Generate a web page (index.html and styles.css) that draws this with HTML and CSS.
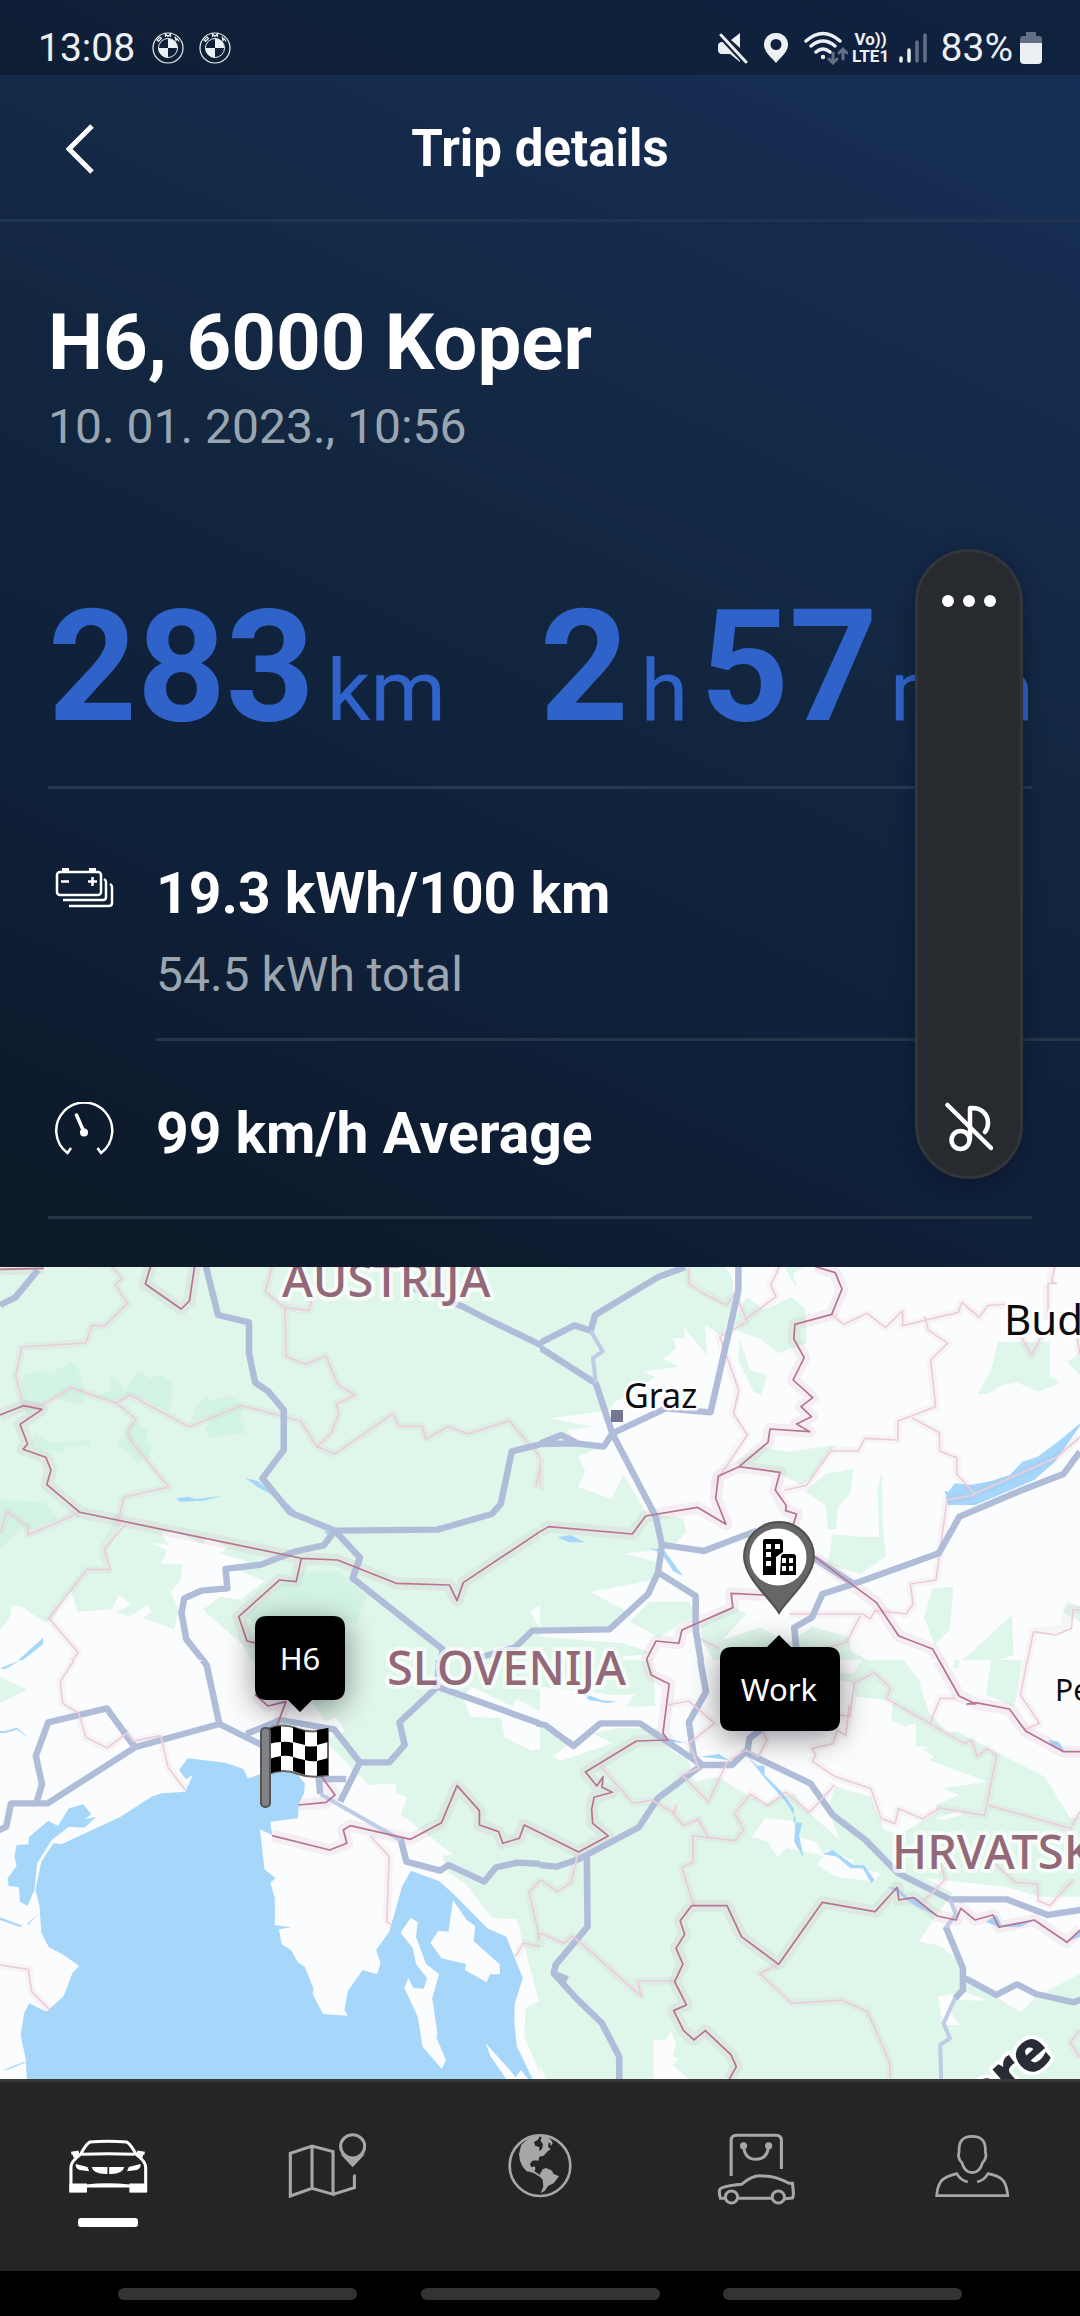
FILE: index.html
```html
<!DOCTYPE html>
<html lang="en">
<head>
<meta charset="utf-8">
<meta name="viewport" content="width=device-width, initial-scale=1">
<title>Trip details</title>
<link rel="stylesheet" href="styles.css">
</head>
<body>
<div class="app">
  <div class="status">
    <span class="clock">13:08</span>
    <svg class="badge" viewBox="0 0 32 32"><use href="#roundel"/></svg>
    <svg class="badge" viewBox="0 0 32 32"><use href="#roundel"/></svg>
    <div class="indicators">
      <svg width="30" height="32" viewBox="0 0 30 32" fill="#eceff3"><path d="M3 10h5l14 16v4L12 22H3q-3-1-3-4v-5q0-2 3-3zM13 8l9-7v15z"/><path d="M3 3l25 27" stroke="#10223a" stroke-width="7"/><path d="M3 3l25 27" stroke="#eceff3" stroke-width="3" stroke-linecap="round"/></svg>
      <svg class="place" width="24" height="32" viewBox="0 0 24 32" fill="#eceff3"><path fill-rule="evenodd" d="M12 1a11.500 11.500 0 0 1 12 12c0 7-8 13-12 18C8 26 0 20 0 13A11.500 11.500 0 0 1 12 1zm0 6a5.500 5.500 0 1 0 0 11 5.500 5.500 0 0 0 0-11z"/></svg>
      <svg class="wifi" width="44" height="34" viewBox="0 0 44 34" fill="none" stroke="#eceff3" stroke-width="3.500" stroke-linecap="round"><path d="M2 10q17-15 34 0M7 15q12-10 24 0M12 21q7-6 14 0"/><circle cx="19" cy="26" r="2.200" fill="#eceff3" stroke="none"/><path d="M29 22v10m-4-4l4 4 4-4M39 28V18m-4 4l4-4 4 4" stroke="#637084" stroke-width="3"/></svg>
      <span class="volte"><span>Vo))</span><span>LTE1</span></span>
      <svg class="bars" width="28" height="32" viewBox="0 0 28 32" stroke-width="3.500" stroke-linecap="round"><path d="M2 26v3M10 18v11" stroke="#eceff3"/><path d="M18 10v19M26 3v26" stroke="#637084"/></svg>
      <span class="percent">83%</span>
      <svg width="22" height="32" viewBox="0 0 22 32"><path d="M6 0h10v4h3q3 0 3 3v5H0V7q0-3 3-3h3z" fill="#637084"/><path d="M0 11h22v17q0 4-4 4H4q-4 0-4-4z" fill="#eceff3"/></svg>
    </div>
  </div>

  <header class="header">
    <button class="back" aria-label="Back"><svg width="28" height="50" viewBox="0 0 28 50" fill="none" stroke="#fff" stroke-width="5"><path d="M26 2L3 25l23 23"/></svg></button>
    <h1>Trip details</h1>
  </header>

  <main class="trip">
    <section class="summary">
      <h2>H6, 6000 Koper</h2>
      <p class="when">10. 01. 2023., 10:56</p>
      <div class="totals">
        <div class="total"><b>283</b><span class="unit">km</span></div>
        <div class="total"><b>2</b><span class="unit">h</span><b>57</b><span class="unit">min</span></div>
      </div>
    </section>
    <section class="facts">
      <div class="fact">
        <svg class="fact-icon" viewBox="0 0 60 64" fill="none" stroke="#fff" stroke-width="2.500"><rect x="3" y="10" width="44" height="23" rx="3"/><path d="M8 6h7v4H8zM35 6h7v4h-7z" fill="#fff" stroke="none"/><path d="M7 19.500h8M34 19.500h9M38.500 15v9M50 17q2 1 2 3v15q0 3-3 3H9M56 22q2 1 2 3v16q0 3-3 3H15"/></svg>
        <div class="fact-body energy"><strong>19.3 kWh/100 km</strong><span>54.5 kWh total</span></div>
      </div>
      <div class="fact">
        <svg class="fact-icon" viewBox="0 0 60 64" fill="none" stroke="#fff" stroke-width="2.500"><path d="M17 46l-3.500 5A28 28 0 1 1 47 51L43.500 46"/><path d="M22.500 13l7.500 17" stroke-width="3.500" stroke-linecap="round"/><circle cx="30" cy="30.500" r="4" fill="#fff" stroke="none"/></svg>
        <div class="fact-body speed"><strong>99 km/h Average</strong></div>
      </div>
    </section>
    <aside class="sound-panel">
      <button aria-label="More"><svg width="54" height="12" viewBox="0 0 54 12" fill="#fff"><circle cx="6" cy="6" r="6"/><circle cx="27" cy="6" r="6"/><circle cx="48" cy="6" r="6"/></svg></button>
      <button aria-label="Media muted"><svg width="48" height="50" viewBox="0 0 48 50" fill="none" stroke="#fff" stroke-width="4.500" stroke-linecap="round" stroke-linejoin="round"><path d="M2.500 3L46 46M25 37V6c11-1 18 6 18 15q0 5-3 9"/><circle cx="15.500" cy="38" r="9"/></svg></button>
    </aside>
  </main>

  <section class="map" aria-label="Route map">
    <svg class="map-art" viewBox="0 7 1080 812" preserveAspectRatio="xMidYMid slice">
      <defs>
        <filter id="shadow" x="-60%" y="-60%" width="220%" height="220%"><feDropShadow dx="0" dy="6" stdDeviation="15" flood-color="#001018" flood-opacity=".45"/></filter>
        <g id="nw">
          <g class="wood"><path d="M0 0H1568V1035L1540 1055 1568 1105V1215H905L740 1215 700 1150 600 1060 590 1048 640 1010 700 1020 768 963 690 930 720 905 640 880 662 860 600 830 590 852 510 815 468 818 490 855 435 848 485 870 470 910 530 912 525 960 495 995 520 1050 505 1108 415 1075 440 1055 430 1035 375 1070 335 1055 382 1035 345 1005 325 1048 225 1055 205 990 150 1080 125 1085 65 1040 35 1035 30 1070 0 1110z"/></g>
          <g class="deep"><path d="M65 345l60-15 20 12 60-35 20 15 20 50-5 65-80-25-70 50-30-20zM320 340l45 50 35-60 38 25-18 65-50-15-40 20-50-15 40-20zM430 360l35-15 35 20v60l-10 30-65-35zM555 480l20-50 30-25v20l60-20 45 30-15 35 20 50-55 5-50 10-15-30 20-30zM100 520l50 30 110-10 5 15-70 5-20 20-40-10-40-5zM380 480l50 30-5 30 15 10-5 50-20-15-15 35-20-35-40-30 30-40zM0 720l130 5 40 55-90 30-20-5-60 60zM815 970l60-35h110l80 70-30 80-280 20-40-40 80-60z"/></g>
          <g class="water"><path d="M0 1228l45-20 80-75v20l-72 58zM512 715l35-5 20 7 25-2 50-8-50 15-70 3zM713 655l35 8 75 60-75-42zM835 730l30 30h-20zM940 812l30 5-15 15z"/></g>
          <g class="region-halo"><path d="M325 20l30 35-20 20 35 55-65 67h-38l-18 52-186 12-17 85 20 90 55 0 86-53 130 47 40-25 172 95 152-63 172 46 48 78 52 20 168-120 17 38h68l10 38 65-37 57 22 120-40 95 115-17 85M340 430l55 48-25 35 10 30 110 138-130 30-20 82-42 77 17 60H253L142 1075l85 103-57 82M0 820l20-65 62 45v25l148-67M790 20l-20 75 55 47 72 10 13-50M827 145l4 145 56 23 59-25 35 85 50 33-55 27 8 28-22 57-42 43M270 20l20-10"/></g>
          <g class="state-halo"><path d="M0 465L68 437 122 448 58 493 80 552 67 568 133 592 148 630 136 674 232 757 875 895 980 900 1150 970 1305 975 1327 1022 1345 968 1568 815M875 895L860 965 812 960 693 1070 717 1143 745 1150M437 20L422 72 526 147 550 123 565 20M0 28L127 25"/></g>
          <g class="region"><path d="M325 20l30 35-20 20 35 55-65 67h-38l-18 52-186 12-17 85 20 90 55 0 86-53 130 47 40-25 172 95 152-63 172 46 48 78 52 20 168-120 17 38h68l10 38 65-37 57 22 120-40 95 115-17 85M340 430l55 48-25 35 10 30 110 138-130 30-20 82M365 793l-62 75 17 60H253L142 1075l85 103-57 82M0 820l20-65 62 45v25l148-67M790 20l-20 75 55 47 72 10 13-50M827 145l4 145 56 23 59-25 35 85 50 33-55 27 8 28-22 57-42 43"/></g>
          <g class="road"><path d="M0 135L45 112 110 30M598 20L633 165 723 187V280L741 368 780 395 824 450V570L762 655 842 757 972 812 1270 809 1428 762 1454 732 1486 574 1580 550M972 812L940 856 855 875 758 914 655 927 660 985 585 992 535 1015 527 1060 541 1138 598 1212 606 1260M972 812L1045 893 1024 955 1285 1168 1270 1290M1200 85L1340 138 1420 180 1580 260M1568 1112h-22l-50 50-150 45-20 60"/></g>
          <g class="state"><path d="M0 465L68 437 122 448 58 493 80 552 67 568 133 592 148 630 136 674 232 757 875 895 980 900 1150 970 1305 975 1327 1022 1345 968 1568 815M875 895L860 965 812 960 693 1070 717 1143 745 1150M437 20L422 72 526 147 550 123 565 20M0 28L127 25"/></g>
        </g>
        <g id="ne">
          <g class="wood"><path d="M0 0H530L560 60V130L530 230 480 195 485 285 420 205 420 235 385 235 397 265 358 297 402 320 300 335 335 352 215 428 205 450 30 475 152 500 80 510 100 540 180 560 110 590 132 635 110 680 208 717 242 645 310 760 415 775 425 815 395 850 350 870 245 880 352 910 330 960 145 995 250 1053 200 1110H0zM600 110l50 40 80-38 40 33 5 105-85 30-45-40-65-25-20-30zM580 240l30 90 50 15-18 60-22-10-45-95zM710 20h55l-30 20 10 45zM860 555l-140 20-80-15-75 50 125 30 70 35 40-35zM910 627l-80 15-60 50 60 45 5 70h25l5-65 35-40zM993 632l-13 60 5 138-60 0-75-7-15 90 95 30 75-55-10-85zM1310 330l20-85h150v100l30 25-65 25-60-28-45 8-40 28-30-1zM1568 280l-38 25 38 40zM1140 985l60-5-10 130-45 45-30-85zM1370 1065l5 120-85 30-50 45-70-20 80-60zM260 1085l60-60 110 0 30 40-60 30-55 37zM600 1060l-70 80 110-38 80 48 70-50 105 30 10 45 100 55v30H535L470 1140v-50l90-50zM0 1130l240 20 90 30-90 10v40L0 1200zM1568 1040l-38-15-10 35 48 25z"/></g>
          <g class="water"><path d="M1580 480l-70 60-65 50-45 15-35 40-55 18-60 12-45-5-20 25-10-2 10 42h80l170-75 60-55zM50 832l40-7 40 22-45 0zM315 865l45 5 55 78-28-14-35-55z"/></g>
          <g class="region-halo"><path d="M395 20l37 10v40l108 65 25-35 35 85-80 45 55 160-15 70 40 65-100 150M595 180l90-70-15-35 25-55M847 163l35 30 68-33 53 42 50-50v45l162-40 10-30 50 45 25-35 55-5M1117 168l10 42 57 40-50 50 15 140-110 43v57l-95-5-20 38h-80l-70 103-65 15M1080 473l80 45v55l50 20v50l52 58 240-110 66-60M1262 705l-80 15-22 160-10 80-75 12 8 60-20 30-90-10-15 25-20-15H725M930 1067l-40 80-70 20M460 1090v45l60 30M1490 20l-10 45M1473 70v110M1395 225l32 62 30-60M1560 235l8 50M1568 1050l-35 0-10 55-90 10-30 150M0 590v100"/></g>
          <g class="state-halo"><path d="M0 815L25 800 268 822 307 768 457 742 540 793 510 715 518 648 578 620 662 547 668 507 783 515 745 492 788 470 758 440 792 413 735 360 767 293 737 237 740 193 847 163 877 87 857 38 800 20M578 620L697 637 683 690 715 752 745 762 735 795M797 890L977 1028 1042 1128 1140 1167 1190 1260M355 1260L325 1245 310 1197 337 1143 403 1150 412 1110 560 1043 555 1000 650 1005"/></g>
          <g class="region"><path d="M400 20l32 10v40l40 30 70 35 25-35 35 85-80 45 55 160-15 70 40 65-82 127M595 180l90-70-15-35 25-55M847 163l35 30 68-33 53 42 50-50v45l162-40 10-30 50 45 25-35 55-5M1117 168l10 42 57 40-50 50 15 140-110 43v57l-95-5-20 38h-80l-70 103-65 15M1080 473l80 45v55l50 20v50l52 58 240-110 66-60M1262 705l-80 15-22 160-10 80-75 12 8 60-20 30-90-10-15 25-20-15H725M930 1067l-40 80-70 20M460 1090v45l60 30M1495 20l-10 45 15 5h-25v110M1395 225l32 62 30-60M1560 235l8 50M1568 1050h-20l-5 55-45 20-65-10-30 150M0 590v100"/></g>
          <g class="road"><path d="M420 22L345 50 160 165 147 212 100 196-12 255 162 370 210 520 336 770 354 855 343 937 452 1008V1110L478 1270M343 937L314 1002 202 1108 0 1112M576 20V92L495 457 365 445 210 520 185 560 105 550 0 552M0 550L62 525 105 548M354 855L475 873 630 812M797 895L910 972M745 1170L738 1103 790 1072 820 1002 910 972 1158 880 1218 770 1400 690 1520 642 1568 575"/><path class="thin" d="M147 212l35 62-28 20 8 76"/></g>
          <g class="state"><path d="M0 815L25 800 268 822 307 768 457 742 540 793 510 715 518 648 578 620 662 547 668 507 783 515 745 492 788 470 758 440 792 413 735 360 767 293 737 237 740 193 847 163 877 87 857 38 800 20M578 620L697 637 683 690 715 737 713 752 745 762 735 795M797 890L977 1028 1042 1128 1140 1167 1190 1260M355 1260L325 1245 310 1197 337 1143 403 1150 412 1110 560 1043 555 1000 650 1005"/></g>
        </g>
        <g id="sw">
          <g class="wood"><path d="M905 0V120L945 185 975 172 1002 215 940 240 1070 375 1150 370V397L1183 412 1163 463 1318 585 1285 587 1300 635 1355 675 1430 775 1500 778 1565 1022 1525 1045 1523 1130 1575 1257V0zM0 50l78 38L0 130z"/></g>
          <g class="land"><path d="M1370 80l120 60 8-25 70 40v110l-23 8-80-40-10-58-90-5-20-60z"/></g>
          <g class="water"><path d="M78 1265L75 1200 60 1125 70 1060 85 1030 135 1055 185 1008 210 940 230 918 185 885 142 862 120 818 115 740 103 690 120 605 155 550 180 552 350 470 440 410 470 400 538 395 560 345 540 357 520 330 545 295 655 308 708 328 720 357 688 366 755 343 800 325 860 340 885 370 883 400 868 430 865 475 785 485 790 525 755 508 768 628 800 655 785 668 798 715V795L845 802 810 808 818 853 845 870 865 907 885 920 910 985 908 1003 938 1062 1010 1067 1000 1050 1010 993 1053 930 1095 943 1105 910 1092 870 1130 815 1150 745 1167 680 1193 632 1275 663 1320 705 1415 805 1470 830 1518 955 1495 1030 1493 1080 1500 1157 1550 1265zM242 433L265 463 247 478 280 470 245 503 200 500 150 540 108 610 100 690 80 738 58 725 55 682 25 678 22 655 48 618 42 590 48 555 82 553 85 530 140 482 168 498 200 445zM0 772l65 25-7 4L0 780zM78 793l32-30-28 32zM5 1232l72-30v4l-50 22zM0 213h15l33-10 38 32-38-26-33 10H0zM0 25L60 0 15 28z"/></g>
          <g class="land"><path d="M1193 773L1213 787 1208 830 1237 912 1275 943 1255 1015 1270 1120 1267 1133 1295 1200 1283 1227 1227 1160 1213 1070 1174 983 1186 953 1200 983 1230 987 1240 955 1208 912 1198 863 1163 818zM1315 720L1355 780 1380 798 1375 843 1450 912 1452 943 1423 943 1413 967 1350 930 1353 912 1282 895 1250 848 1273 812 1302 815zM1410 1150L1478 1227 1497 1253 1512 1230 1540 1265H1475L1425 1190z"/></g>
          <g class="region-halo"><path d="M215 0l-40 65 7 65 47 30 20 72 62 32 58-45 17 25 80-17 22 95 50 68M0 915l82 13 10 67 55 57M1075 528l55 62-7 195 15 10M1497 890l22-40 49 10M1568 660l-32 37 32 145"/></g>
          <g class="state-halo"><path d="M740 103L778 138 830 125 805 195M930 345L973 405 947 427 867 435M790 527L957 570 1007 550 997 510 1017 497 1192 538 1282 488 1327 377 1392 452V495L1448 515 1460 550 1508 535 1522 495 1568 518"/></g>
          <g class="road"><path d="M588 0l12 15L637 192 392 262 138 430H32L18 500-5 512M392 262L310 145 140 187 104 288 122 372 107 425M637 192L760 255M715 222L815 180 970 208 1045 307 988 425M920 357h85M925 350l5 52M1045 307h85L1175 255 1160 187 1270 80 1275 0M1270 80L1580 195M1163 535L1180 605 1278 632 1303 615 1406 665 1440 622 1502 608 1580 612"/><path class="thin" d="M930 402L1163 540"/></g>
          <g class="region"><path d="M215 0l-40 65 7 65 47 30 20 72 62 32 58-45 17 25 80-17 22 95 50 68M0 915l82 13 10 67 55 57M1075 528l55 62-7 195 15 10M1497 890l22-40 49 10M1568 660l-32 37 32 145"/></g>
          <g class="state"><path d="M740 103L778 138 830 125 805 195M930 345L973 405 947 427 867 435M790 527L957 570 1007 550 997 510 1017 497 1192 538 1282 488 1327 377 1392 452V495L1448 515 1460 550 1508 535 1522 495 1568 518"/></g>
        </g>
        <g id="se">
          <g class="wood"><path d="M0 0H1580V1265H0z"/></g>
          <g class="land"><path d="M0 80L140 95 210 105 275 103 250 140 335 138 330 40 320 0H560V60H870L910 70 915 110 1000 120 1025 120 1020 180 1058 200 1092 190V260L1145 260 1110 268 1145 290 1130 300 1300 365 1170 385 1218 405 1150 435V460L1050 520 1000 510 960 410 860 380 835 440 870 540 805 480 760 440 740 400 650 430 560 380 520 350 450 365 430 300 380 270 340 205 225 205 150 220 210 250 60 302 35 290 100 240 0 200zM870 0V40H910L935 0zM1055 0L1100 60 1130 160 1180 215 1210 213 1350 290 1465 350 1540 475 1580 465V0zM615 530L655 473 735 483 750 530 800 545 830 590 715 563 690 590 660 545zM805 615L835 570 910 600 905 620 993 640 970 665 860 650zM1120 655L1350 680 1450 710H1580V935L1440 1010 1395 1057 1330 1015 1240 960 1230 920 1165 858 1100 845 1145 775 1200 700zM1155 1010L1230 995 1300 1022 1205 1020 1195 1060 1220 1095H1170zM330 1140H365L380 1113 395 1150 385 1190 403 1195 385 1215 440 1265H330zM0 1215l20 50H0zM1150 475l60-20 20 10-60 15z"/></g>
          <g class="wood"><path d="M1310 0H1400L1378 140 1295 105zM1205 0l-5 25 15 0 3-25z"/></g>
          <g class="water"><path d="M600 285l30 32h22v28l50 50 35 50v40l25 5-10 35 14 70-28-50 5-70-30-50-60-70zM822 582l28-12 60 45 30 0 32 45-10 10-25-45-35 0-40-35zM1010 680l30 5 25 25 30 5 60 55-70-35-45-35zM1295 785l30-20 15 30 100-15-50 22-60-2zM1475 240l30 5 20 30-35-15zM465 290l55-8 28 18-40-5zM110 90l65 30 48 5-30 4-50-9zM372 235l55 15-50-5zM1530 845l38-35v20z"/></g>
          <g class="region-halo"><path d="M372 135l60-12 75 67-75 60 30 75-50 20 77 80 55-120 55-35 35 20 25-50-15-30M870 165l30 5 12-100 58-32 47 45-10 33 225 135 22-10 15 48 30-23 27 20-35 180-130-22-50 32-70-30-10 45-40-15-30-90-105-37-65-45 10-20-12-18 62-15 12-40 25 15 10-90M855 375l-72 82-70-60-52 40-50-35-45 58 25 50-25 32-122-15v80l-32 15 35 118M175 318l95 112 55-10 65 40 27 37 42-20 30 55M1130 195l32-80h45M1415 0l-20 105 55 85-45 20M1305 437l235 68 28-50M110 580l-20 88-40 27-50-37M0 820l70 30 25-22 200 182-12-47h107M693 913l-55 27 93 90 145-10 75 35 65 155v45M1165 610l10 50-62 65M1320 610l60 57 65 5 2 50 33 15 70-80M1568 1110l-28 38 28 45M0 820v40"/></g>
          <g class="state-halo"><path d="M0 518L112 576 198 528 153 490 150 448 157 412 210 397 165 378 132 336 280 243 372 240 357 220 375 72 323 45 310 0M1158 0L1217 108 1265 132 1363 147 1410 213 1520 275H1568M440 737H543L585 830 693 913 820 727 973 755 1037 682 1042 720 1085 713 1153 768 1208 780 1222 745 1263 780 1315 765 1333 802 1435 780 1530 847 1568 810M440 737L407 782 420 823 395 865 415 912 391 965 425 1035 388 1052 417 1112 447 1140 480 1112 555 1185 570 1220 550 1257"/></g>
          <g class="road"><path d="M465 0L482 95 432 187 447 290 470 315H557L603 270 608 235 640 210M-10 190L15 195 97 258 175 190H290L470 315 342 415 287 502 112 598 47 620 0 615M603 280L785 370 850 465 945 540 1040 640 1190 718H1355L1475 765 1580 748M136 590L138 800 45 915 40 940 105 1015 180 1090 230 1190V1265M40 940l40 18M1178 800L1228 925V990L1205 1015M1235 955L1325 1005 1385 973 1440 1002 1550 1027 1580 1015"/><path class="thin" d="M1190 718l18 45-30 40M1205 1015l-33 75 18 45-28 20 3 110"/></g>
          <g class="region"><path d="M372 135l60-12 75 67-75 60 30 75-50 20 77 80 55-120 55-35 35 20 25-50-15-30M870 165l30 5 12-100 58-32 47 45-10 33 225 135 22-10 15 48 30-23 27 20-35 180-130-22-50 32-70-30-10 45-40-15-30-90-105-37-65-45 10-20-12-18 62-15 12-40 25 15 10-90M855 375l-72 82-70-60-52 40-50-35-45 58 25 50-25 32-122-15v80l-32 15 35 118M175 318l95 112 55-10 65 40 5-25-10 25 32 37 42-20 30 55M1130 195l32-80h45M1415 0l-20 105 55 85-45 20M1305 437l235 68 28-50M110 580l-20 88-40 27-50-37M0 820l70 30 25-22 200 182-12-47h107M693 913l-55 27 93 90 145-10 75 35 65 155v45M1165 610l10 50-62 65M1320 610l60 57 65 5 2 50 33 15 70-80M1568 1110l-28 38 28 45"/></g>
          <g class="state"><path d="M0 518L112 576 198 528 153 490 150 448 157 412 210 397 180 382 183 350 165 378 132 336 280 243 372 240 357 220 375 72 323 45 310 0M1158 0L1217 108 1265 132H1240L1265 128 1363 147 1410 213 1520 275H1568M440 737H543L585 830 693 913 820 727 973 755 1037 682 1042 720 1085 713 1153 768 1208 780 1222 745 1263 780 1315 765 1333 802 1435 780 1530 847 1568 810M440 737L407 782 420 823 395 865 415 912 391 965 425 1035 388 1052 417 1112 447 1140 480 1112 555 1185 570 1220 550 1257"/></g>
        </g>
        <clipPath id="upper"><path d="M0 0H1580V1201H0z"/></clipPath>
      </defs>
      <g transform="matrix(.3444 0 0 .3333 0 0)"><use href="#nw" clip-path="url(#upper)"/></g>
      <g transform="matrix(.3444 0 0 .3333 540 0)"><use href="#ne" clip-path="url(#upper)"/></g>
      <g transform="matrix(.3444 0 0 .3333 0 400)"><use href="#sw"/></g>
      <g transform="matrix(.3444 0 0 .3333 540 400)"><use href="#se"/></g>

      <g class="country">
        <text x="282" y="37">AUSTRIJA</text>
        <text x="387" y="425">SLOVENIJA</text>
        <text x="892" y="609">HRVATSK</text>
      </g>
      <rect x="611" y="150" width="12" height="12" fill="#727891"/>
      <g class="city">
        <text x="624" y="148" font-size="34">Graz</text>
        <text x="1004" y="75" font-size="42">Bud</text>
        <text x="1055" y="441" font-size="30">Pé</text>
      </g>
      <text class="mark" transform="translate(984 858) rotate(-41)">ere</text>

      <g filter="url(#shadow)">
        <path d="M267 356h66q12 0 12 12v60q0 12-12 12h-21l-12 12-12-12h-21q-12 0-12-12v-60q0-12 12-12z"/>
        <path d="M732 387h35l12-12 12 12h37q12 0 12 12v60q0 12-12 12h-96q-12 0-12-12v-60q0-12 12-12z"/>
      </g>
      <g class="tip" text-anchor="middle">
        <text x="300" y="410">H6</text>
        <text x="779" y="441">Work</text>
      </g>

      <g transform="translate(261 465)">
        <path d="M7 4q14-7 30 0 14 5 30 0v46q-16 4-30-1-14-6-30 0z" fill="#fff" stroke="#666" stroke-width="2"/>
        <path d="M8 4q6-3 12-3v16q-6 0-12 2zM32 2l12 4v14l-12-3zM56 5l11-2v14l-11 3zM20 17q6-1 12 1v14q-6-2-12-1zM44 21q6 1 12 0v15q-6 1-12-1zM8 34q6-2 12-3v15q-6 0-12 3zM32 32q6 2 12 3v15q-6-2-12-4zM56 36l11-3v17l-11 1z"/>
        <rect x="0" y="3" width="9" height="79" rx="4" fill="#808285" stroke="#555" stroke-width="2"/>
      </g>
      <g transform="translate(743 261)">
        <path d="M36 92C28 78 2 58 1 36a35 35 0 0 1 70 0C70 58 44 78 36 92z" fill="#666" stroke="#505050" stroke-width="2"/>
        <circle cx="35" cy="36" r="28.500" fill="#fff"/>
        <path d="M20 20q0-2 2-2h15q3 0 3 3v10l-7 5v18H20zM38 36q0-3 3-3h9q3 0 3 3v18H37z"/>
        <path d="M23 23h5v5h-5zM32 23h5v5h-5zM23 31h5v5h-5zM23 40h5v5h-5zM39 37h4v5h-4zM46 37h4v5h-4zM39 45h4v5h-4zM46 45h4v5h-4z" fill="#fff"/>
      </g>
    </svg>
  </section>

  <nav class="tabs" aria-label="Main">
    <button class="tab active" aria-label="Vehicle"><svg viewBox="0 0 84 80"><g transform="matrix(.3444 0 0 .3333 -66 -60)" fill="none" stroke="currentColor" stroke-width="9"><path d="M206 362v-70q0-18 28-39 15-30 27-37 50-5 107 0 12 7 27 37 28 21 28 39v70h-40v-14H246v14zM238 253q75-4 152 0M207 250l22-4M212 258l20-4M420 250l-22-4M415 258l-20-4M250 348q60-8 127 0"/><path d="M206 345h42v18h-42zM380 345h42v18h-42z" fill="currentColor"/><path d="M220 282l34 9 5 13-28-4q-13-5-11-18zM408 282l-34 9-5 13 28-4q13-5 11-18zM266 291h46v21q-40 2-46-21zM361 291h-44v21q38 2 44-21z" fill="currentColor" stroke="none"/></g></svg></button>
    <button class="tab" aria-label="Map"><svg viewBox="0 0 84 80"><g transform="matrix(.3444 0 0 .3333 -282 -60)" fill="none" stroke="currentColor" stroke-width="9"><path d="M843 378V250l63-22 61 17v128l-61-18zM906 228v127M967 373l62-20v-36l-2-2"/><circle cx="1024" cy="229" r="35"/><path d="M988 252q36 20 72 0l-36 40z" fill="currentColor" stroke="none"/></g></svg></button>
    <button class="tab" aria-label="Explore"><svg viewBox="0 0 84 80"><g transform="matrix(.3333 0 0 .3333 2 -4)" fill="currentColor"><circle cx="120" cy="119" r="91" fill="none" stroke="currentColor" stroke-width="8"/><path d="M64 56q28-28 56-28l-6 13-12 7 4 12 12 3v13l8-7 3-14-7-10 4-16 20 7 13 16-13-2-2 12 8 8-9 6-12 13-13 3-3 13-6-2-12 1-7 10 4 10 11-3 1 8-3 7 13 8 3 8-14-9-13-5-12-2-12-14-8-18-3-20zM119 28q30 3 39 22l-5 10-5-16-16-9zM128 130l10-4 18 8 4 9 17 8-7 9-9 12-16 7-12 17-11 5 8-19-2-21-11-12z"/></g></svg></button>
    <button class="tab" aria-label="Store"><svg viewBox="0 0 84 80"><g transform="matrix(.3444 0 0 .3333 -174 -60)" fill="none" stroke="currentColor" stroke-width="9"><path d="M555 318V212q0-16 16-16H685q16 0 16 16v85M591 228q3 40 36 40t37-40"/><circle cx="591" cy="227" r="6" fill="currentColor"/><circle cx="664" cy="227" r="6" fill="currentColor"/><path d="M538 385h-14q-4-12-3-24 2-12 64-18 35-30 60-25 35-3 78 22h10l2 18q2 20-2 26l-22 2M577 385h95"/><circle cx="556" cy="381" r="18"/><circle cx="692" cy="381" r="18"/></g></svg></button>
    <button class="tab" aria-label="Profile"><svg viewBox="0 0 84 80"><g transform="matrix(.3444 0 0 .3333 -390 -60)" fill="none" stroke="currentColor" stroke-width="8"><path d="M1255 199q41 0 38 45 6 20-8 34-8 30-30 30t-30-30q-14-14-8-34-3-45 38-45zM1242 336q-20-4-32-25-32 8-45 22-12 18-13 44h206q-2-28-12-44-12-16-45-22-12 21-32 25"/></g></svg></button>
  </nav>
  <div class="system-bar"><span></span><span></span><span></span></div>
</div>

<svg class="symbols" aria-hidden="true">
  <symbol id="roundel" viewBox="0 0 32 32">
    <circle cx="16" cy="16" r="15" fill="none" stroke="#eceff3" stroke-width="1.200"/>
    <circle cx="16" cy="16" r="9.500" fill="none" stroke="#eceff3"/>
    <path d="M16 16V6.500a9.500 9.500 0 0 1 9.500 9.500zM16 16v9.500A9.500 9.500 0 0 1 6.500 16z" fill="#eceff3"/>
    <path d="M13.500 5V2l2.500 2.500L18.500 2v3M5 8l3-3 1.500 1.500L6.500 9.500zM23 4.500l1 4 1-2 2 3" fill="none" stroke="#eceff3" stroke-width="1.200"/>
  </symbol>
</svg>
</body>
</html>
```
FILE: styles.css
```css
* { box-sizing: border-box; margin: 0; padding: 0; }
body { font-family: Roboto, "Noto Sans", sans-serif; color: #fff; background: #000; }
button { border: 0; background: none; color: inherit; display: flex; align-items: center; justify-content: center; cursor: pointer; }
svg { display: block; flex: none; }
.symbols { display: none; }

.app {
  min-height: 100vh;
  display: flex;
  flex-direction: column;
  background: linear-gradient(205deg, #163058 0, #152a4a 450px, #12263f 750px, #0f2039 1142px, #0d1b2e 1400px, #0c1a27 1605px) no-repeat;
}

.status {
  height: 75px;
  padding: 20px 38px 0 38px;
  display: flex;
  align-items: center;
  gap: 15px;
  background: rgba(8, 16, 28, .42);
  color: #eceff3;
  font-size: 39px;
  line-height: 40px;
}
.badge { width: 32px; height: 32px; }
.clock { margin-right: 2px; }
.indicators { margin-left: auto; display: flex; align-items: center; }
.place { margin-left: 16px; }
.wifi { margin: 0 4px 0 16px; }
.volte { display: flex; flex-direction: column; align-items: center; width: 38px; font-size: 17px; line-height: 17px; font-weight: 700; }
.bars { margin: 0 14px 0 9px; }
.percent { margin-right: 7px; }

.header {
  height: 147px;
  padding-top: 4px;
  display: grid;
  grid-template-columns: 160px 1fr 160px;
  align-items: center;
  border-bottom: 3px solid #1e3450;
}
.header h1 { grid-column: 2; text-align: center; font-size: 51px; line-height: 60px; }
.back { height: 100px; justify-self: stretch; }

.trip { position: relative; padding-bottom: 48px; }
.summary { margin: 0 48px; padding: 77px 0 39px; border-bottom: 3px solid #263951; }
.summary h2 { font-size: 78px; line-height: 88px; }
.when { margin-top: 12px; color: #9aa5b2; font-size: 48px; line-height: 56px; }
.totals { margin-top: 132px; display: flex; gap: 94px; color: #3063c9; white-space: nowrap; }
.total { display: flex; align-items: baseline; gap: 12px; }
.total b { font-size: 155px; line-height: 160px; }
.unit { font-size: 86px; line-height: 90px; }

.facts { margin-left: 54px; }
.fact { display: flex; gap: 42px; }
.fact-icon { width: 60px; height: 64px; margin-top: 73px; }
.fact-body { flex: 1; display: flex; flex-direction: column; gap: 21px; }
.fact-body strong { font-size: 57px; line-height: 64px; }
.fact-body span { color: #9aa5b0; font-size: 48px; line-height: 56px; }
.energy { padding: 73px 0 35px; border-bottom: 3px solid #263648; }
.speed { padding: 61px 0 50px; }
.fact:last-child { margin: 0 48px 0 -6px; padding-left: 6px; border-bottom: 3px solid #263648; }
.fact:last-child .fact-icon { margin-top: 61px; }

.sound-panel {
  position: absolute;
  top: 327px;
  right: 57px;
  width: 108px;
  height: 630px;
  padding: 43px 0 24px;
  display: flex;
  flex-direction: column;
  align-items: center;
  justify-content: space-between;
  background: #272a2e;
  border: 3px solid #32363a;
  border-radius: 54px;
  box-shadow: 0 4px 20px rgba(0, 8, 20, .35);
}

.map { flex: 1 0 auto; position: relative; background: #fbfcfe; overflow: hidden; }
.map-art { width: 100%; height: auto; }
.land { fill: #fbfcfe; }
.wood { fill: #dff6ea; }
.deep { fill: #d3f4e5; }
.water { fill: #a6d7fa; }
.road, .state, .region, .state-halo, .region-halo { fill: none; stroke-linejoin: round; }
.road { stroke: #b0bdd9; stroke-width: 19; }
.thin { stroke: #c0cce6; stroke-width: 12; }
.state { stroke: #b87592; stroke-width: 5; }
.region { stroke: #eccdd8; stroke-width: 5; }
.state-halo { stroke: rgba(184, 117, 146, .1); stroke-width: 36; }
.region-halo { stroke: rgba(184, 117, 146, .06); stroke-width: 24; }
.map text { font-family: "Noto Sans", sans-serif; }
.country { fill: #936879; font-size: 47px; font-weight: 500; paint-order: stroke; stroke: rgba(255, 255, 255, .7); stroke-width: 8px; stroke-linejoin: round; }
.city { fill: #0c0c0e; paint-order: stroke; stroke: #fff; stroke-width: 5px; stroke-linejoin: round; }
.mark { fill: #272c36; font-size: 56px; font-weight: 900; paint-order: stroke; stroke: #fff; stroke-width: 7px; stroke-linejoin: round; }
.tip { fill: #fff; font-size: 31px; }

.tabs { height: 192px; display: grid; grid-template-columns: repeat(5, 1fr); background: #242527; border-top: 3px solid #37393b; color: #a6a8a8; }
.tab { flex-direction: column; justify-content: flex-start; padding-top: 48px; }
.tab svg { width: 84px; height: 80px; }
.active { color: #fff; }
.active::after { content: ""; width: 60px; height: 9px; margin-top: 8px; border-radius: 3px; background: #fff; }
.system-bar { height: 45px; padding: 17px 118px 0; display: flex; justify-content: space-between; background: #000; }
.system-bar span { width: 239px; height: 12px; border-radius: 6px; background: #333; }
```
